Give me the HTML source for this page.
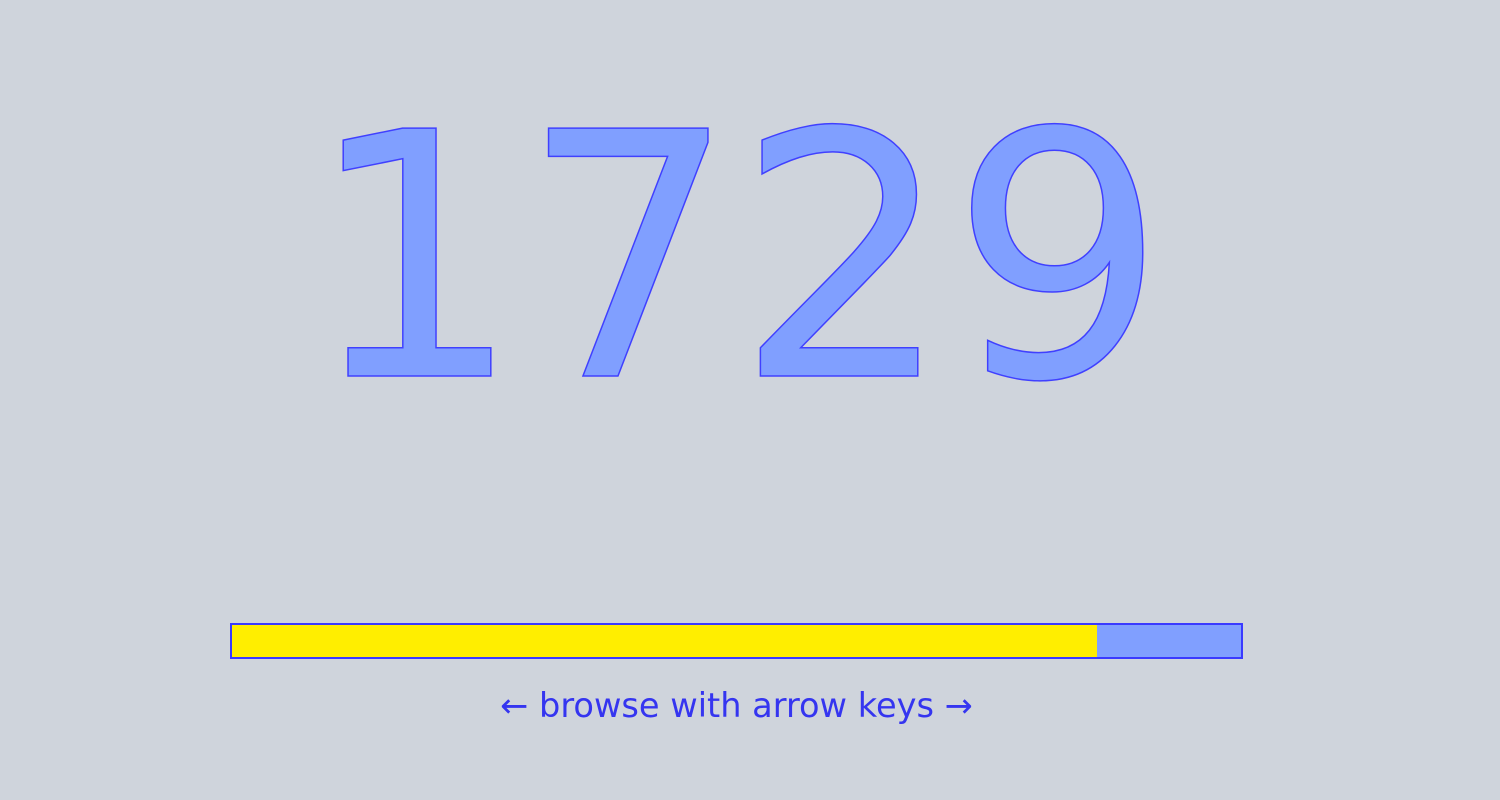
<!DOCTYPE html>
<html><head><meta charset="utf-8"><style>
html,body{margin:0;padding:0;width:1500px;height:800px;background:#cfd4dc;overflow:hidden;font-family:"DejaVu Sans","Liberation Sans",sans-serif;}
.num{position:absolute;left:0;top:59px;width:1471px;text-align:center;font-size:340px;line-height:400px;color:#809fff;-webkit-text-stroke:1.5px #4040ff;letter-spacing:-1.5px;}
.bar{position:absolute;left:230px;top:623px;width:1009px;height:32px;border:2px solid #3a3aff;background:#809fff;}
.fill{position:absolute;left:0;top:0;width:865px;height:32px;background:#ffee00;}
.hint{position:absolute;left:0;top:686px;width:1473px;text-align:center;font-size:33.6px;color:#3535f0;}
</style></head><body>
<div class="num">1729</div>
<div class="bar"><div class="fill"></div></div>
<div class="hint">← browse with arrow keys →</div>
</body></html>
